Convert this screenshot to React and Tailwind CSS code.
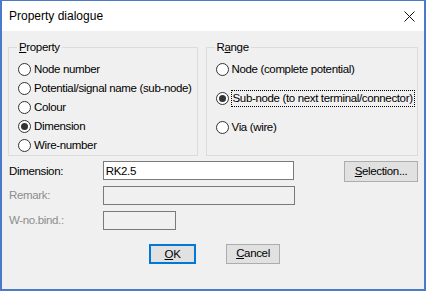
import React, { useState } from "react";

const font = { fontFamily: '"Liberation Sans", Arial, sans-serif' };

const Radio = ({ checked, label, focused, onClick }) => (
  <div className="flex items-center h-[19px] cursor-default" onClick={onClick}>
    <span className="relative w-[13px] h-[13px] rounded-full border border-[#333333] bg-white flex items-center justify-center shrink-0">
      {checked && <span className="w-[7px] h-[7px] rounded-full bg-[#333333]" />}
    </span>
    <span
      className={
        focused
          ? "ml-[2px] px-[1px] leading-[15px] border border-dotted border-black"
          : "ml-[3px] leading-[15px]"
      }
    >
      {label}
    </span>
  </div>
);

const Group = ({ width, title, children }) => (
  <div className="relative h-[109px] border border-[#dcdcdc]" style={{ width }}>
    <span className="absolute top-[-8px] left-[8px] px-[2px] bg-[#f0f0f0] leading-[14px] text-black">
      {title}
    </span>
    {children}
  </div>
);

const App = () => {
  const [property, setProperty] = useState("dimension");
  const [range, setRange] = useState("subnode");
  const [dimension, setDimension] = useState("RK2.5");

  const properties = [
    ["node", "Node number"],
    ["potential", "Potential/signal name (sub-node)"],
    ["colour", "Colour"],
    ["dimension", "Dimension"],
    ["wire", "Wire-number"],
  ];

  const ranges = [
    ["node", "Node (complete potential)"],
    ["subnode", "Sub-node (to next terminal/connector)"],
    ["via", "Via (wire)"],
  ];

  return (
    <div
      className="w-[426px] h-[291px] flex flex-col bg-[#f0f0f0] border-t border-x-2 border-b-2 border-[#4a7bc8] text-[11.5px] text-black tracking-[-0.35px]"
      style={font}
    >
      <div className="h-[30px] shrink-0 bg-white flex items-center justify-between pl-[7px] pr-[9px]">
        <span className="text-[12px] tracking-normal">Property dialogue</span>
        <svg width="11" height="11" viewBox="0 0 11 11">
          <path d="M0.5 0.5 L10.5 10.5 M10.5 0.5 L0.5 10.5" stroke="#111" strokeWidth="1" fill="none" />
        </svg>
      </div>

      <div className="flex-1 px-[6px]">
        <div className="mt-[16px] flex gap-[8px]">
          <Group width={190} title={<><u>P</u>roperty</>}>
            <div className="pt-[12px] pl-[9px] flex flex-col">
              {properties.map(([key, label]) => (
                <Radio
                  key={key}
                  label={label}
                  checked={property === key}
                  onClick={() => setProperty(key)}
                />
              ))}
            </div>
          </Group>
          <Group width={213} title={<>R<u>a</u>nge</>}>
            <div className="pt-[12px] pl-[9px] flex flex-col gap-[10px]">
              {ranges.map(([key, label]) => (
                <Radio
                  key={key}
                  label={label}
                  checked={range === key}
                  focused={range === key}
                  onClick={() => setRange(key)}
                />
              ))}
            </div>
          </Group>
        </div>

        <div className="mt-[5px] flex items-start">
          <label className="w-[95px] pl-[1px] leading-[20px]">Dimension:</label>
          <input
            value={dimension}
            onChange={(e) => setDimension(e.target.value)}
            className="w-[192px] h-[19px] border border-[#7a7a7a] bg-white px-[2px] text-[11.5px] tracking-[-0.35px] outline-none"
            style={font}
          />
          <button className="ml-[50px] w-[74px] h-[21px] border border-[#adadad] bg-[#e1e1e1]">
            <u>S</u>election...
          </button>
        </div>

        <div className="mt-[4px] flex items-start">
          <label className="w-[95px] pl-[1px] leading-[19px] text-[#8d8d8d]">Remark:</label>
          <input disabled className="w-[192px] h-[19px] border border-[#7a7a7a] bg-[#f0f0f0]" />
        </div>

        <div className="mt-[6px] flex items-start">
          <label className="w-[95px] pl-[1px] leading-[19px] text-[#8d8d8d]">W-no.bind.:</label>
          <input disabled className="w-[73px] h-[19px] border border-[#7a7a7a] bg-[#f0f0f0]" />
        </div>

        <div className="mt-[14px] flex pl-[141px] gap-[30px]">
          <button className="w-[47px] h-[20px] border-2 border-[#0078d7] bg-[#e1e1e1]">
            <u>O</u>K
          </button>
          <button className="w-[54px] h-[20px] border border-[#adadad] bg-[#e1e1e1]">
            <u>C</u>ancel
          </button>
        </div>
      </div>
    </div>
  );
};

export default App;
